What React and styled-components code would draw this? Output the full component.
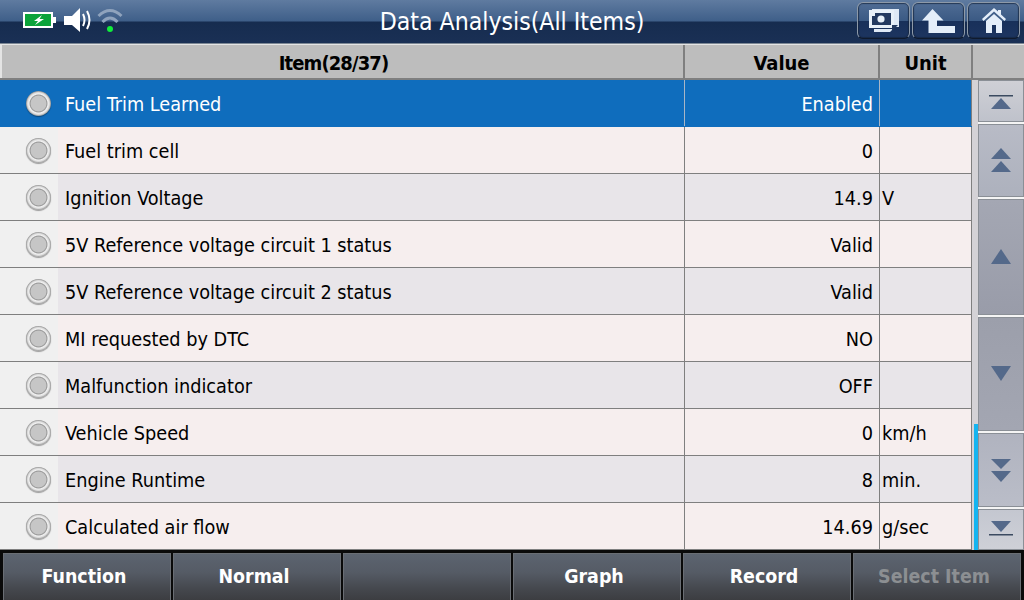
import React from "react";
import styled, { createGlobalStyle } from "styled-components";

const GlobalStyle = createGlobalStyle`
  html, body {
    margin: 0;
    padding: 0;
    background: #000;
  }
  body {
    font-family: "DejaVu Sans Condensed", "DejaVu Sans", sans-serif;
  }
`;

const Screen = styled.div`
  width: 1024px;
  height: 600px;
  display: flex;
  flex-direction: column;
  overflow: hidden;
`;

const TopBar = styled.div`
  height: 44px;
  flex: none;
  display: flex;
  align-items: center;
  justify-content: space-between;
  box-sizing: border-box;
  border-bottom: 1px solid #7c8794;
  background: linear-gradient(to bottom, #5f7ba0 0, #3f5f89 21px, #162c4f 22px, #1a3055 43px);
`;

const StatusIcons = styled.div`
  display: flex;
  align-items: center;
  gap: 5px;
  width: 300px;
  padding-left: 23px;
  padding-bottom: 3px;
  box-sizing: border-box;
`;

const Title = styled.div`
  flex: 1;
  text-align: center;
  color: #fff;
  font-size: 24.6px;
  line-height: 46px;
`;

const TopButtons = styled.div`
  width: 300px;
  display: flex;
  justify-content: flex-end;
  gap: 2px;
  padding-right: 4px;
  padding-bottom: 2px;
  box-sizing: border-box;
`;

const TopButton = styled.div`
  width: 53px;
  height: 37px;
  box-sizing: border-box;
  display: flex;
  align-items: center;
  justify-content: center;
  border: 1px solid #8d99a8;
  border-bottom-color: #101a2c;
  border-radius: 6px;
  background: linear-gradient(to bottom, #4f6c94 0, #3b5a84 50%, #18305a 52%, #1d3560 100%);
  box-shadow: inset 0 0 1px 1px rgba(20, 35, 60, 0.7);
`;

const HeaderRow = styled.div`
  height: 36px;
  flex: none;
  display: flex;
  box-sizing: border-box;
  background: #bdbdbd;
  border-top: 1px solid #e4e4e4;
  border-bottom: 2px solid #7f7f7f;
`;

const HeaderCell = styled.div`
  width: ${(p) => p.$w}px;
  flex: none;
  box-sizing: border-box;
  border-right: 2px solid #7f7f7f;
  border-left: ${(p) => (p.$first ? "2px solid #e4e4e4" : "none")};
  padding-right: ${(p) => (p.$first ? "18px" : "0")};
  text-align: center;
  color: #000;
  font-weight: bold;
  font-size: 20px;
  line-height: 36px;
  letter-spacing: ${(p) => (p.$first ? "-0.9px" : "0")};
`;

const Body = styled.div`
  height: 470px;
  flex: none;
  display: flex;
`;

const Rows = styled.div`
  width: 972px;
  flex: none;
  display: flex;
  flex-direction: column;
`;

const Row = styled.div`
  height: 47px;
  flex: none;
  box-sizing: border-box;
  display: flex;
  border-bottom: 1px solid ${(p) => (p.$selected ? "#0f6dbd" : "#7f7f7f")};
  color: ${(p) => (p.$selected ? "#fff" : "#000")};
  background: ${(p) => (p.$selected ? "#0f6dbd" : p.$alt ? "#e8e5e9" : "#f6eeee")};
  font-size: 19.7px;
  line-height: 49px;
`;

const LampCell = styled.div`
  width: 58px;
  flex: none;
  display: flex;
  align-items: center;
  padding-left: 26px;
  box-sizing: border-box;
  background: ${(p) => (p.$selected ? "transparent" : "#f0f0f0")};
`;

const Lamp = styled.div`
  width: 25px;
  height: 25px;
  flex: none;
  border-radius: 50%;
  box-shadow: 0 1px 1px rgba(0, 0, 0, 0.35);
  background: radial-gradient(
    circle closest-side,
    #c6c6c6 0,
    #c6c6c6 60%,
    #969696 67%,
    #f2f2f2 76%,
    #dadada 88%,
    #8f8f8f 100%
  );
`;

const ItemCell = styled.div`
  width: 627px;
  flex: none;
  padding-left: 7px;
  box-sizing: border-box;
  border-right: 1px solid ${(p) => (p.$selected ? "#a9b6c6" : "#7f7f7f")};
  white-space: nowrap;
`;

const ValueCell = styled.div`
  width: 195px;
  flex: none;
  padding-right: 6px;
  box-sizing: border-box;
  text-align: right;
  border-right: 1px solid ${(p) => (p.$selected ? "#a9b6c6" : "#7f7f7f")};
`;

const UnitCell = styled.div`
  flex: 1;
  padding-left: 2px;
  border-right: 1px solid #7f7f7f;
`;

const ScrollTrack = styled.div`
  width: 6px;
  flex: none;
  display: flex;
  flex-direction: column;
  justify-content: flex-end;
  background: #d4d2d6;
`;

const ScrollThumb = styled.div`
  height: 126px;
  margin-left: 2px;
  background: #14b4f0;
`;

const ScrollButtons = styled.div`
  flex: 1;
  display: flex;
  flex-direction: column;
  gap: 2px;
  background: #f4f4f4;
`;

const ScrollButton = styled.div`
  height: ${(p) => p.$h}px;
  flex: none;
  box-sizing: border-box;
  display: flex;
  align-items: center;
  justify-content: center;
  border: 1px solid #8a8f96;
  background: ${(p) => p.$bg};
`;

const Footer = styled.div`
  height: 50px;
  flex: none;
  box-sizing: border-box;
  display: flex;
  gap: 2px;
  padding: 3px 3px 0;
  background: #0a0a0a;
`;

const FooterButton = styled.div`
  width: 168px;
  flex: none;
  box-sizing: border-box;
  border: 1px solid #6a6e74;
  border-bottom: none;
  padding-right: 6px;
  text-align: center;
  color: ${(p) => (p.$disabled ? "#8c8f92" : "#fff")};
  font-weight: bold;
  font-size: 19.4px;
  line-height: 45px;
  background: linear-gradient(to bottom, #5c6470 0, #555b65 40%, #45484e 75%, #3c3d41 100%);
`;

const ArrowColor = "#54698a";

const Battery = () => (
  <svg width="36" height="18" viewBox="0 0 36 18">
    <rect x="1" y="2" width="28" height="14" fill="#0ba33a" stroke="#fff" strokeWidth="2" />
    <rect x="30" y="6" width="3" height="6" fill="#fff" />
    <path d="M19 4 L11 10 H15 L12 14 L21 8 H16.5 Z" fill="#fff" />
  </svg>
);

const Speaker = () => (
  <svg width="28" height="26" viewBox="0 0 28 26">
    <path d="M0 9 H8 L16 1 V25 L8 18 H0 Z" fill="#fff" />
    <path d="M19 7 Q22 13 19 19" fill="none" stroke="#fff" strokeWidth="2" />
    <path d="M23 4 Q28 13 23 22" fill="none" stroke="#fff" strokeWidth="2" />
  </svg>
);

const Wifi = () => (
  <svg width="28" height="24" viewBox="0 0 28 24">
    <path d="M1.5 8 Q13 -3 24.5 8" fill="none" stroke="#8fa3bd" strokeWidth="3" />
    <path d="M5.5 14 Q13 6 20.5 14" fill="none" stroke="#8fa3bd" strokeWidth="3" />
    <circle cx="13" cy="21" r="3" fill="#10ee3a" />
  </svg>
);

const CameraIcon = () => (
  <svg width="32" height="25" viewBox="0 0 32 25">
    <path d="M4 1 H31 V19 H27 L22 24 H6 V21 H25 V4 H4 Z" fill="#dfe9f5" />
    <rect x="1" y="2" width="25" height="18" fill="#e8f0f8" />
    <rect x="4" y="5" width="19" height="12" fill="#23395f" />
    <circle cx="13" cy="11" r="3.6" fill="#e8f0f8" />
    <rect x="4" y="5" width="3" height="3" fill="#e8f0f8" />
    <path d="M24 23 L30 17 H24 Z" fill="#23395f" />
  </svg>
);

const UpIcon = () => (
  <svg width="33" height="24" viewBox="0 0 33 24">
    <path d="M10.5 0 L21.5 11.5 H15 V17 H33 V24 H6.5 V11.5 H0 Z" fill="#e4eef9" />
  </svg>
);

const HomeIcon = () => (
  <svg width="24" height="25" viewBox="0 0 24 25">
    <path d="M12 0 L16 3.6 V2 H19 V6.4 L24 11 L22.5 13 L12 3.5 L1.5 13 L0 11 Z" fill="#e4eef9" />
    <path d="M4 13 L12 6 L20 13 V25 H14 V17 H10 V25 H4 Z" fill="#e4eef9" />
  </svg>
);

const ScrollIcon = ({ dir, count = 1, bar }) => {
  const up = dir === "up";
  if (bar) {
    return (
      <svg width="24" height="20" viewBox={up ? "0 -4 24 20" : "0 0 24 20"}>
        {up ? (
          <>
            <rect x="0" y="0" width="24" height="1.5" fill="#3b4a60" />
            <path d="M12 3 L2 14 H22 Z" fill={ArrowColor} />
          </>
        ) : (
          <>
            <path d="M2 1 H22 L12 12 Z" fill={ArrowColor} />
            <rect x="0" y="14" width="24" height="1.5" fill="#3b4a60" />
          </>
        )}
      </svg>
    );
  }
  if (count === 2) {
    return (
      <svg width="20" height="25" viewBox="0 0 20 25">
        {up ? (
          <>
            <path d="M10 0 L0 11 H20 Z" fill={ArrowColor} />
            <path d="M10 13 L0 24 H20 Z" fill={ArrowColor} />
          </>
        ) : (
          <>
            <path d="M0 1 H20 L10 11 Z" fill={ArrowColor} />
            <path d="M0 13 H20 L10 24 Z" fill={ArrowColor} />
          </>
        )}
      </svg>
    );
  }
  return (
    <svg width="20" height="16" viewBox="0 0 20 16">
      <path d={up ? "M10 0 L0 15 H20 Z" : "M0 0 H20 L10 15 Z"} fill={ArrowColor} />
    </svg>
  );
};

const rows = [
  { name: "Fuel Trim Learned", value: "Enabled", unit: "", selected: true },
  { name: "Fuel trim cell", value: "0", unit: "" },
  { name: "Ignition Voltage", value: "14.9", unit: "V" },
  { name: "5V Reference voltage circuit 1 status", value: "Valid", unit: "" },
  { name: "5V Reference voltage circuit 2 status", value: "Valid", unit: "" },
  { name: "MI requested by DTC", value: "NO", unit: "" },
  { name: "Malfunction indicator", value: "OFF", unit: "" },
  { name: "Vehicle Speed", value: "0", unit: "km/h" },
  { name: "Engine Runtime", value: "8", unit: "min." },
  { name: "Calculated air flow", value: "14.69", unit: "g/sec" },
];

const altRows = [2, 4, 6, 8];

const scrollButtons = [
  { h: 42, bg: "linear-gradient(to bottom, #cfd0d6, #bfc2cb)", dir: "up", bar: true },
  { h: 73, bg: "linear-gradient(to bottom, #b8bbc6, #adb1bd)", dir: "up", count: 2 },
  { h: 116, bg: "linear-gradient(to bottom, #a4a7b3, #999ca9)", dir: "up" },
  { h: 114, bg: "linear-gradient(to bottom, #9c9fab, #a3a6b2)", dir: "down" },
  { h: 74, bg: "linear-gradient(to bottom, #b0b3bf, #babdc8)", dir: "down", count: 2 },
  { h: 41, bg: "linear-gradient(to bottom, #c4c7d0, #ced0d7)", dir: "down", bar: true },
];

const footerLabels = ["Function", "Normal", "", "Graph", "Record", "Select Item"];

const App = () => {
  return (
    <Screen>
      <GlobalStyle />
      <TopBar>
        <StatusIcons>
          <Battery />
          <Speaker />
          <Wifi />
        </StatusIcons>
        <Title>Data Analysis(All Items)</Title>
        <TopButtons>
          <TopButton>
            <CameraIcon />
          </TopButton>
          <TopButton>
            <UpIcon />
          </TopButton>
          <TopButton>
            <HomeIcon />
          </TopButton>
        </TopButtons>
      </TopBar>
      <HeaderRow>
        <HeaderCell $first $w={685}>Item(28/37)</HeaderCell>
        <HeaderCell $w={195}>Value</HeaderCell>
        <HeaderCell $w={93}>Unit</HeaderCell>
      </HeaderRow>
      <Body>
        <Rows>
          {rows.map((row, index) => (
            <Row key={index} $selected={row.selected} $alt={altRows.includes(index)}>
              <LampCell $selected={row.selected}>
                <Lamp />
              </LampCell>
              <ItemCell $selected={row.selected}>{row.name}</ItemCell>
              <ValueCell $selected={row.selected}>{row.value}</ValueCell>
              <UnitCell>{row.unit}</UnitCell>
            </Row>
          ))}
        </Rows>
        <ScrollTrack>
          <ScrollThumb />
        </ScrollTrack>
        <ScrollButtons>
          {scrollButtons.map((btn, index) => (
            <ScrollButton key={index} $h={btn.h} $bg={btn.bg}>
              <ScrollIcon dir={btn.dir} count={btn.count} bar={btn.bar} />
            </ScrollButton>
          ))}
        </ScrollButtons>
      </Body>
      <Footer>
        {footerLabels.map((label, index) => (
          <FooterButton key={index} $disabled={label === "Select Item"}>
            {label}
          </FooterButton>
        ))}
      </Footer>
    </Screen>
  );
};

export default App;
